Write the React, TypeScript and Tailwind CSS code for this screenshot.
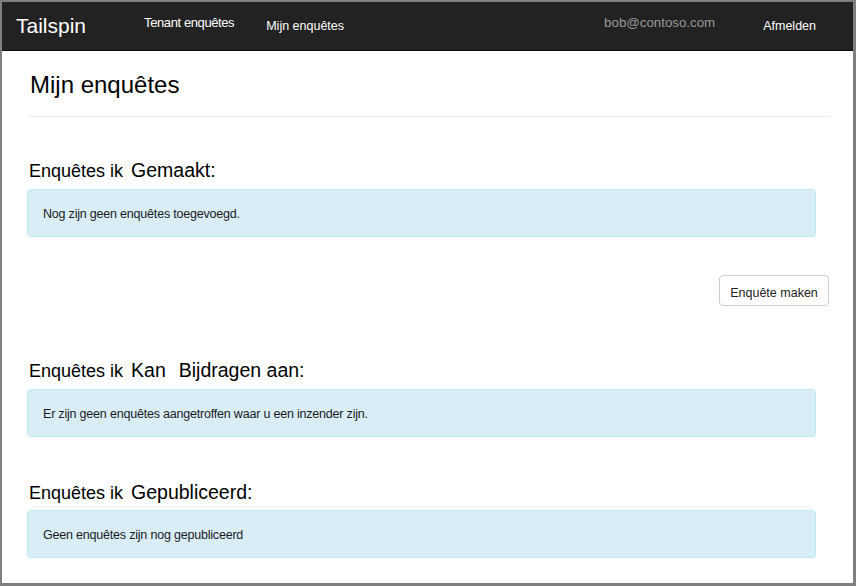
const sections = [
  { title: "Gemaakt:", extra: "", message: "Nog zijn geen enquêtes toegevoegd." },
  { title: "Kan", extra: "Bijdragen aan:", message: "Er zijn geen enquêtes aangetroffen waar u een inzender zijn." },
  { title: "Gepubliceerd:", extra: "", message: "Geen enquêtes zijn nog gepubliceerd" },
]

function SectionTitle({ title, extra }: { title: string; extra: string }) {
  return (
    <h3 className="flex h-[20px] items-baseline text-[18px] leading-[20px] text-black">
      <span>Enquêtes ik</span>
      <span className="ml-[8px] text-[19.5px] leading-[20px]">{title}</span>
      {extra && <span className="ml-[13px] text-[19.5px] leading-[20px]">{extra}</span>}
    </h3>
  )
}

function Alert({ message }: { message: string }) {
  return (
    <div className="mr-[14px] flex h-[48px] items-center rounded-[4px] border border-[#bce8f1] bg-[#d9edf7] px-[15px] pt-[2px] text-[12.5px] tracking-[-0.2px] text-[#1a1a24]">
      {message}
    </div>
  )
}

export default function App() {
  return (
    <div
      className="h-[586px] w-[856px] overflow-hidden border-b-[3px] border-l-2 border-r-[3px] border-t-2 border-[#7f7f7f] bg-white"
      style={{ fontFamily: '"Liberation Sans", Arial, sans-serif' }}
    >
      <nav className="flex h-[49px] items-center border-b border-[#080808] bg-[#222222] text-[13px] text-white">
        <span className="ml-[14px] text-[21px]">Tailspin</span>
        <span className="mb-[6px] ml-[58px] tracking-[-0.4px]">Tenant enquêtes</span>
        <span className="ml-[32px] text-[12.5px]">Mijn enquêtes</span>
        <span className="mb-[6px] ml-auto text-[13.3px] text-[#999999]">bob@contoso.com</span>
        <span className="ml-[48px] mr-[37px] text-[12.5px]">Afmelden</span>
      </nav>

      <main className="pl-[25px] pr-[23px]">
        <h1 className="mt-[21px] pl-[3px] text-[24px] leading-[26px] text-black">Mijn enquêtes</h1>
        <hr className="mt-[18px] border-t border-[#eeeeee]" />

        <div className="mt-[43px] pl-[2px]">
          <SectionTitle title={sections[0].title} extra={sections[0].extra} />
        </div>
        <div className="mt-[9px]">
          <Alert message={sections[0].message} />
        </div>

        <div className="mt-[38px] flex justify-end pr-px">
          <button
            type="button"
            className="h-[31px] w-[110px] rounded-[4px] border border-[#cccccc] bg-white pt-[5px] text-[12.5px] leading-[20px] text-[#222]"
          >
            Enquête maken
          </button>
        </div>

        <div className="mt-[54px] pl-[2px]">
          <SectionTitle title={sections[1].title} extra={sections[1].extra} />
        </div>
        <div className="mt-[9px]">
          <Alert message={sections[1].message} />
        </div>

        <div className="mt-[45px] pl-[2px]">
          <SectionTitle title={sections[2].title} extra={sections[2].extra} />
        </div>
        <div className="mt-[8px]">
          <Alert message={sections[2].message} />
        </div>
      </main>
    </div>
  )
}
